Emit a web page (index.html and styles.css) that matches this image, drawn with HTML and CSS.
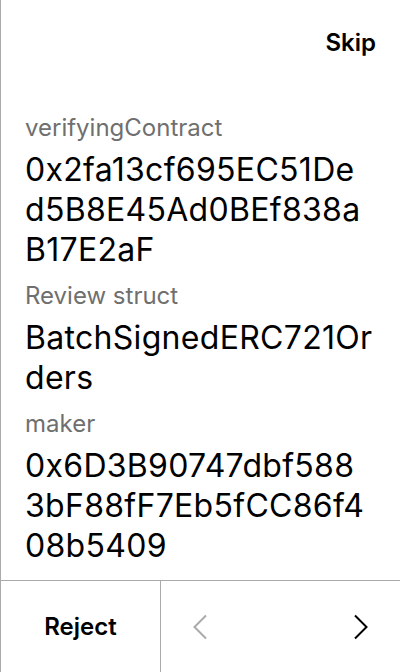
FILE: index.html
```html
<!DOCTYPE html>
<html>
<head>
<meta charset="utf-8">
<link rel="stylesheet" href="styles.css">
</head>
<body>
<div class="screen">
  <div class="header">
    <span class="skip">Skip</span>
  </div>
  <div class="content">
    <div class="field">
      <div class="label">verifyingContract</div>
      <div class="value">0x2fa13cf695EC51De<br>d5B8E45Ad0BEf838a<br>B17E2aF</div>
    </div>
    <div class="field">
      <div class="label">Review struct</div>
      <div class="value">BatchSignedERC721Or<br>ders</div>
    </div>
    <div class="field">
      <div class="label">maker</div>
      <div class="value">0x6D3B90747dbf588<br>3bF88fF7Eb5fCC86f4<br>08b5409</div>
    </div>
  </div>
  <div class="footer">
    <div class="reject">Reject</div>
    <div class="nav">
      <svg class="chev prev" width="16" height="26" viewBox="0 0 16 26"><polyline points="14,1.5 2.5,13 14,24.5" fill="none" stroke="currentColor" stroke-width="2"/></svg>
      <svg class="chev next" width="16" height="26" viewBox="0 0 16 26"><polyline points="2,1.5 13.5,13 2,24.5" fill="none" stroke="currentColor" stroke-width="2"/></svg>
    </div>
  </div>
</div>
</body>
</html>
```
FILE: styles.css
```css
html, body {
  margin: 0;
  padding: 0;
  background: #fff;
}
body {
  font-family: Inter, "Noto Sans", sans-serif;
  color: #000;
}
.screen {
  width: 400px;
  height: 672px;
  box-sizing: border-box;
  border-left: 1px solid #aaaaaa;
  display: flex;
  flex-direction: column;
}
.header {
  display: flex;
  justify-content: flex-end;
  padding: 27px 24px 0 24px;
  height: 32px;
}
.skip {
  font-size: 24px;
  line-height: 32px;
  font-weight: 600;
}
.content {
  flex: 1;
  padding: 53px 24px 0 24px;
  display: flex;
  flex-direction: column;
  gap: 10px;
}
.label {
  font-size: 24px;
  line-height: 32px;
  color: #6f6f6f;
}
.value {
  font-size: 32px;
  line-height: 40px;
  letter-spacing: 0.3px;
  margin-top: 6px;
  white-space: nowrap;
}
.footer {
  height: 92px;
  box-sizing: border-box;
  border-top: 1px solid #aaaaaa;
  display: flex;
}
.reject {
  width: 159px;
  border-right: 1px solid #aaaaaa;
  display: flex;
  align-items: center;
  justify-content: center;
  font-size: 24px;
  font-weight: 600;
}
.nav {
  flex: 1;
  display: flex;
  align-items: center;
  justify-content: space-between;
  padding: 0 31px 0 31px;
}
.chev.prev {
  color: #aaaaaa;
}
.chev.next {
  color: #000;
}
```
